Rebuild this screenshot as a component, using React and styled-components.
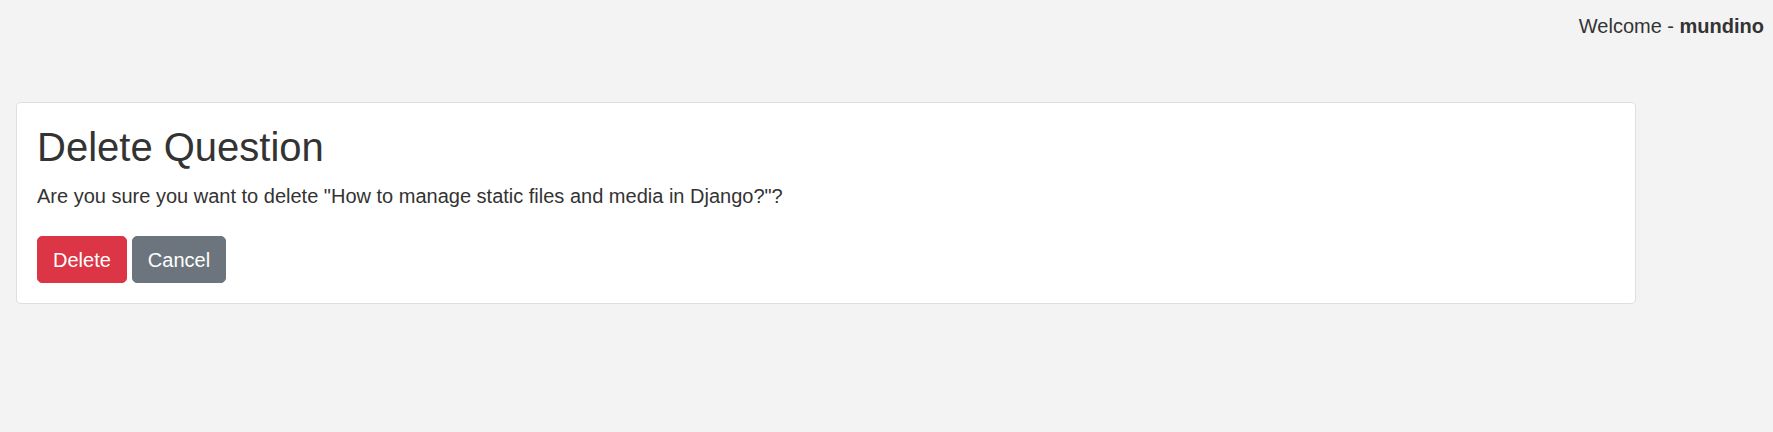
import React from 'react';
import styled, { createGlobalStyle } from 'styled-components';

const GlobalStyle = createGlobalStyle`
  body {
    margin: 0;
    background: #f3f3f3;
    font-family: "Liberation Sans", Arial, sans-serif;
    font-size: 20px;
    line-height: 1.5;
    color: #333;
  }
`;

const Page = styled.div`
  display: flex;
  flex-direction: column;
  min-height: 432px;
`;

const TopBar = styled.div`
  display: flex;
  justify-content: flex-end;
  padding: 11px 9px 0 0;
  height: 30px;

  b {
    font-weight: bold;
  }
`;

const Main = styled.div`
  padding: 61px 137px 0 16px;
`;

const Card = styled.div`
  background: #fff;
  border: 1px solid rgba(0, 0, 0, 0.125);
  border-radius: 5px;
  padding: 20px;
`;

const Title = styled.h2`
  margin: 0 0 10px;
  font-size: 40px;
  font-weight: 500;
  line-height: 1.2;
`;

const Text = styled.p`
  margin: 0 0 25px;
`;

const Actions = styled.div`
  display: flex;
  gap: 5px;
`;

const Button = styled.button`
  font-family: inherit;
  font-size: 20px;
  line-height: 1.5;
  color: #fff;
  padding: 7.5px 15px;
  border: 1px solid ${p => p.$color};
  background: ${p => p.$color};
  border-radius: 5px;
  cursor: pointer;
`;

const App = () => {
  return (
    <Page>
      <GlobalStyle />
      <TopBar>
        <span>Welcome - <b>mundino</b></span>
      </TopBar>
      <Main>
        <Card>
          <Title>Delete Question</Title>
          <Text>Are you sure you want to delete "How to manage static files and media in Django?"?</Text>
          <Actions>
            <Button $color="#dc3545">Delete</Button>
            <Button $color="#6c757d">Cancel</Button>
          </Actions>
        </Card>
      </Main>
    </Page>
  );
};

export default App;
